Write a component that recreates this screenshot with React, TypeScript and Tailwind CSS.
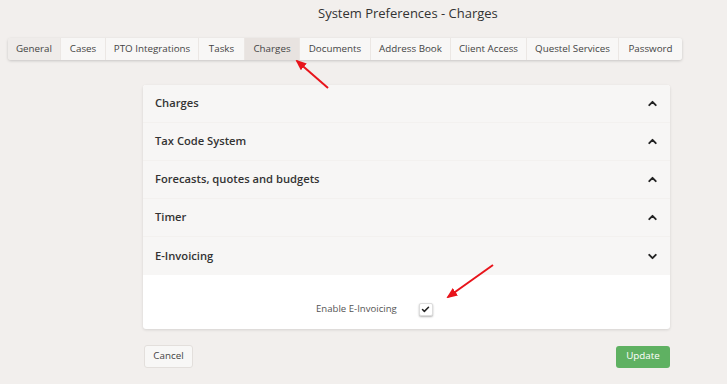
import { ChevronDown, ChevronUp, Check } from 'lucide-react'

const tabs = [
  { label: 'General', w: 'w-[53px]', tone: 'bg-[#efecea]' },
  { label: 'Cases', w: 'w-[45px]', tone: 'bg-[#f8f7f6]' },
  { label: 'PTO Integrations', w: 'w-[93px]', tone: 'bg-[#f8f7f6]' },
  { label: 'Tasks', w: 'w-[46px]', tone: 'bg-[#f8f7f6]' },
  { label: 'Charges', w: 'w-[55px]', tone: 'bg-[#e8e3e0]' },
  { label: 'Documents', w: 'w-[71px]', tone: 'bg-[#f8f7f6]' },
  { label: 'Address Book', w: 'w-[80px]', tone: 'bg-[#f8f7f6]' },
  { label: 'Client Access', w: 'w-[76px]', tone: 'bg-[#f8f7f6]' },
  { label: 'Questel Services', w: 'w-[92px]', tone: 'bg-[#f8f7f6]' },
  { label: 'Password', w: 'w-[63px]', tone: 'bg-[#f8f7f6]' },
]

const sections = [
  { title: 'Charges', open: false },
  { title: 'Tax Code System', open: false },
  { title: 'Forecasts, quotes and budgets', open: false },
  { title: 'Timer', open: false },
  { title: 'E-Invoicing', open: true },
]

function Arrows() {
  return (
    <svg className="pointer-events-none absolute inset-0" width="727" height="384">
      <defs>
        <marker id="head" markerWidth="11" markerHeight="9" refX="9" refY="4.5" orient="auto" markerUnits="userSpaceOnUse">
          <path d="M0,0 L11,4.5 L0,9 Z" fill="#e8141b" />
        </marker>
      </defs>
      <line x1="328" y1="88" x2="297" y2="61" stroke="#e8141b" strokeWidth="2" markerEnd="url(#head)" />
      <line x1="493" y1="265" x2="448" y2="297" stroke="#e8141b" strokeWidth="2" markerEnd="url(#head)" />
    </svg>
  )
}

export default function App() {
  return (
    <div
      className="relative h-[384px] w-[727px] overflow-hidden bg-[#f2efed] text-[#333]"
      style={{ fontFamily: '"Open Sans", "Noto Sans", sans-serif' }}
    >
      <h1 className="pt-[3px] pl-[318px] text-[13px] leading-[20px] text-[#333]">System Preferences - Charges</h1>

      <nav className="ml-[8px] mt-[15px] flex h-[22px] w-[674px] overflow-hidden rounded-[3px] shadow-[0_1px_3px_rgba(0,0,0,0.18)]">
        {tabs.map((t) => (
          <div
            key={t.label}
            className={`${t.w} ${t.tone} flex shrink-0 items-center justify-center border-r border-[#ebe7e4] text-[9.8px] text-[#444] last:border-r-0`}
          >
            {t.label}
          </div>
        ))}
      </nav>

      <section className="ml-[143px] mt-[25px] w-[527px] overflow-hidden rounded-[3px] bg-white shadow-[0_1px_3px_rgba(0,0,0,0.12)]">
        {sections.map((s, i) => (
          <div
            key={s.title}
            className={`flex h-[38px] items-center justify-between bg-[#f7f6f5] pl-[12px] pr-[11px] ${i < sections.length - 1 ? 'border-b border-[#f3f1ef]' : ''}`}
          >
            <span className="text-[11.2px] font-semibold text-[#333]">{s.title}</span>
            {s.open ? (
              <ChevronDown size={13} strokeWidth={3.5} className="text-[#222]" />
            ) : (
              <ChevronUp size={13} strokeWidth={3.5} className="text-[#222]" />
            )}
          </div>
        ))}
        <div className="flex h-[54px] items-end gap-[22px] pb-[13px] pl-[173px]">
          <span className="text-[9.6px] leading-[14px] text-[#555]">Enable E-Invoicing</span>
          <span className="flex h-[13px] w-[14px] items-center justify-center rounded-[2px] border border-[#ddd] bg-white shadow-[0_1px_2px_rgba(0,0,0,0.3)]">
            <Check size={9} strokeWidth={4} className="text-[#222]" />
          </span>
        </div>
      </section>

      <div className="ml-[144px] mt-[16px] flex w-[526px] items-center justify-between">
        <button className="h-[23px] w-[49px] rounded-[3px] border border-[#e3dfdc] bg-[#f8f7f6] text-[9.8px] text-[#444]">
          Cancel
        </button>
        <button className="h-[22px] w-[54px] rounded-[3px] bg-[#5fb162] text-[9.8px] text-white">Update</button>
      </div>

      <Arrows />
    </div>
  )
}
